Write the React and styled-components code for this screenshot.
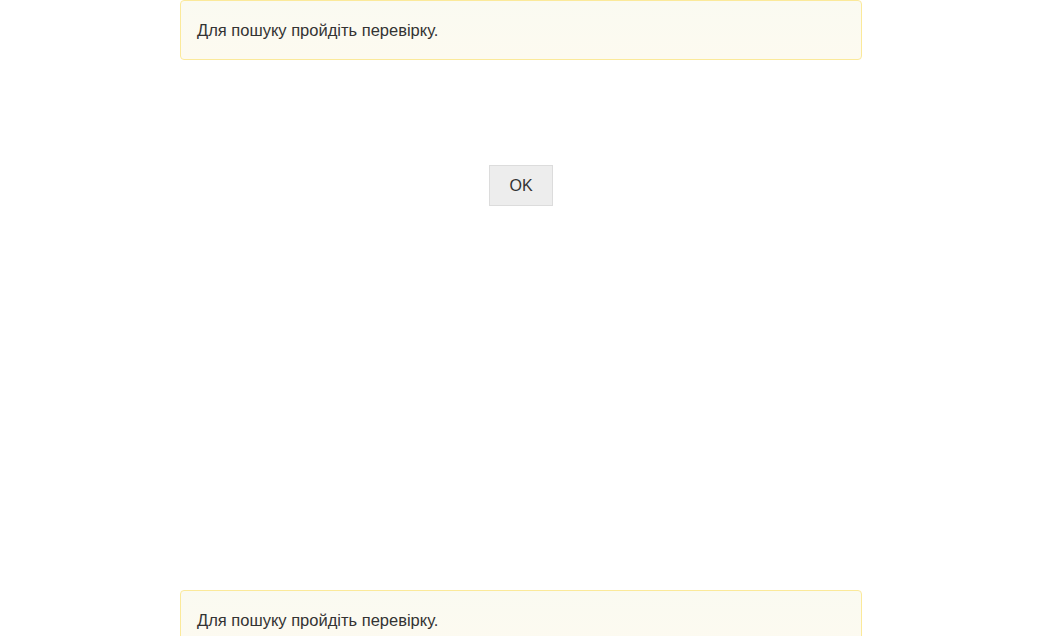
import React from 'react';
import styled, { createGlobalStyle } from 'styled-components';

const GlobalStyle = createGlobalStyle`
  html, body {
    margin: 0;
    padding: 0;
    background: #fff;
  }
  body {
    font-family: "Liberation Sans", Arial, sans-serif;
    font-size: 16px;
    color: #333;
  }
`;

const Page = styled.div`
  width: 682px;
  margin: 0 auto;
  display: flex;
  flex-direction: column;
`;

const Alert = styled.div`
  box-sizing: border-box;
  height: 60px;
  padding: 1px 16px 0;
  display: flex;
  align-items: center;
  border: 1px solid #fbe99a;
  border-radius: 4px;
  background: linear-gradient(to bottom, #fafaf1 0%, #fdfaf0 100%);
  color: #333;
  font-size: 16.5px;
`;

const CaptchaArea = styled.div`
  padding-top: 105px;
  display: flex;
  justify-content: center;
`;

const Button = styled.button`
  box-sizing: border-box;
  width: 64px;
  height: 41px;
  background: #ededed;
  border: 1px solid #dcdcdc;
  border-radius: 0;
  color: #333;
  font-family: "Liberation Sans", Arial, sans-serif;
  font-size: 16px;
  cursor: pointer;
  padding: 1px 0 0;
`;

const Spacer = styled.div`
  height: 384px;
`;

export default function App() {
  return (
    <>
      <GlobalStyle />
      <Page>
        <Alert>Для пошуку пройдіть перевірку.</Alert>
        <CaptchaArea>
          <Button>OK</Button>
        </CaptchaArea>
        <Spacer />
        <Alert>Для пошуку пройдіть перевірку.</Alert>
      </Page>
    </>
  );
}
